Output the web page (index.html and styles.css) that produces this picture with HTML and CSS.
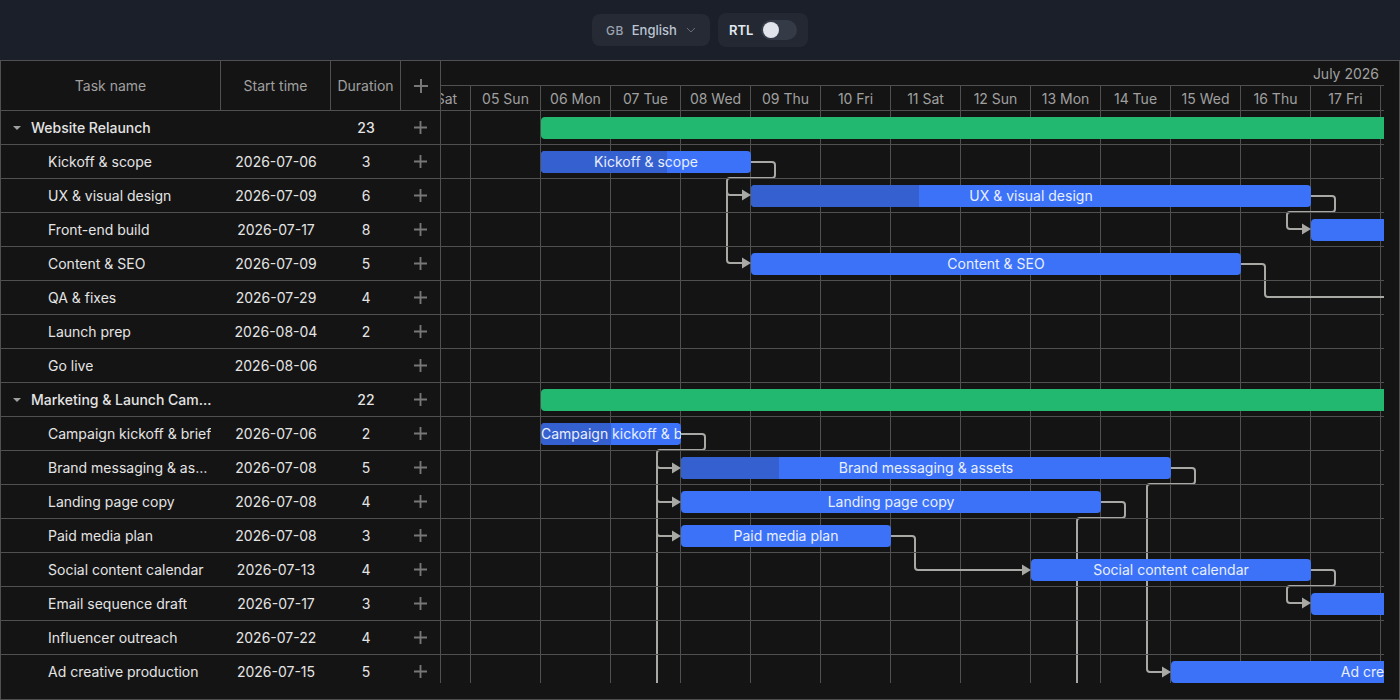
FILE: index.html
```html
<!DOCTYPE html>
<html lang="en">
<head>
    <meta charset="UTF-8">
    <meta name="viewport" content="width=device-width, initial-scale=1.0">
    <title>Gantt Chart</title>
    <link rel="stylesheet" href="styles.css">
</head>
<body>
    <svg class="defs" width="0" height="0">
        <symbol id="plus" viewBox="0 0 14 14"><path d="M7 0v14M0 7h14" stroke="currentColor" stroke-width="2" fill="none"/></symbol>
    </svg>
    <div class="toolbar">
        <div class="lang-select">
            <span class="lang-code">GB</span>
            <span class="lang-name">English</span>
            <svg class="chevron" width="10" height="6" viewBox="0 0 10 6"><path d="M1 1l4 4 4-4" stroke="currentColor" fill="none"/></svg>
        </div>
        <div class="rtl-box">
            <span class="rtl-label">RTL</span>
            <div class="switch"><div class="knob"></div></div>
        </div>
    </div>
    <div class="gantt">
        <div class="grid">
            <div class="grid-head">
                <div class="head-cell col-name">Task name</div>
                <div class="head-cell col-start">Start time</div>
                <div class="head-cell col-dur">Duration</div>
                <div class="head-cell col-add"><svg class="plus plus-head"><use href="#plus"/></svg></div>
            </div>
            <div class="grid-body">
                <div class="row group">
                    <div class="col-name"><span class="caret"></span><span class="name">Website Relaunch</span></div>
                    <div class="col-start"></div><div class="col-dur">23</div>
                    <div class="col-add"><svg class="plus"><use href="#plus"/></svg></div>
                </div>
                <div class="row">
                    <div class="col-name"><span class="name">Kickoff &amp; scope</span></div>
                    <div class="col-start">2026-07-06</div><div class="col-dur">3</div>
                    <div class="col-add"><svg class="plus"><use href="#plus"/></svg></div>
                </div>
                <div class="row">
                    <div class="col-name"><span class="name">UX &amp; visual design</span></div>
                    <div class="col-start">2026-07-09</div><div class="col-dur">6</div>
                    <div class="col-add"><svg class="plus"><use href="#plus"/></svg></div>
                </div>
                <div class="row">
                    <div class="col-name"><span class="name">Front-end build</span></div>
                    <div class="col-start">2026-07-17</div><div class="col-dur">8</div>
                    <div class="col-add"><svg class="plus"><use href="#plus"/></svg></div>
                </div>
                <div class="row">
                    <div class="col-name"><span class="name">Content &amp; SEO</span></div>
                    <div class="col-start">2026-07-09</div><div class="col-dur">5</div>
                    <div class="col-add"><svg class="plus"><use href="#plus"/></svg></div>
                </div>
                <div class="row">
                    <div class="col-name"><span class="name">QA &amp; fixes</span></div>
                    <div class="col-start">2026-07-29</div><div class="col-dur">4</div>
                    <div class="col-add"><svg class="plus"><use href="#plus"/></svg></div>
                </div>
                <div class="row">
                    <div class="col-name"><span class="name">Launch prep</span></div>
                    <div class="col-start">2026-08-04</div><div class="col-dur">2</div>
                    <div class="col-add"><svg class="plus"><use href="#plus"/></svg></div>
                </div>
                <div class="row">
                    <div class="col-name"><span class="name">Go live</span></div>
                    <div class="col-start">2026-08-06</div><div class="col-dur"></div>
                    <div class="col-add"><svg class="plus"><use href="#plus"/></svg></div>
                </div>
                <div class="row group">
                    <div class="col-name"><span class="caret"></span><span class="name">Marketing &amp; Launch Campaign</span></div>
                    <div class="col-start"></div><div class="col-dur">22</div>
                    <div class="col-add"><svg class="plus"><use href="#plus"/></svg></div>
                </div>
                <div class="row">
                    <div class="col-name"><span class="name">Campaign kickoff &amp; brief</span></div>
                    <div class="col-start">2026-07-06</div><div class="col-dur">2</div>
                    <div class="col-add"><svg class="plus"><use href="#plus"/></svg></div>
                </div>
                <div class="row">
                    <div class="col-name"><span class="name">Brand messaging &amp; assets</span></div>
                    <div class="col-start">2026-07-08</div><div class="col-dur">5</div>
                    <div class="col-add"><svg class="plus"><use href="#plus"/></svg></div>
                </div>
                <div class="row">
                    <div class="col-name"><span class="name">Landing page copy</span></div>
                    <div class="col-start">2026-07-08</div><div class="col-dur">4</div>
                    <div class="col-add"><svg class="plus"><use href="#plus"/></svg></div>
                </div>
                <div class="row">
                    <div class="col-name"><span class="name">Paid media plan</span></div>
                    <div class="col-start">2026-07-08</div><div class="col-dur">3</div>
                    <div class="col-add"><svg class="plus"><use href="#plus"/></svg></div>
                </div>
                <div class="row">
                    <div class="col-name"><span class="name">Social content calendar</span></div>
                    <div class="col-start">2026-07-13</div><div class="col-dur">4</div>
                    <div class="col-add"><svg class="plus"><use href="#plus"/></svg></div>
                </div>
                <div class="row">
                    <div class="col-name"><span class="name">Email sequence draft</span></div>
                    <div class="col-start">2026-07-17</div><div class="col-dur">3</div>
                    <div class="col-add"><svg class="plus"><use href="#plus"/></svg></div>
                </div>
                <div class="row">
                    <div class="col-name"><span class="name">Influencer outreach</span></div>
                    <div class="col-start">2026-07-22</div><div class="col-dur">4</div>
                    <div class="col-add"><svg class="plus"><use href="#plus"/></svg></div>
                </div>
                <div class="row">
                    <div class="col-name"><span class="name">Ad creative production</span></div>
                    <div class="col-start">2026-07-15</div><div class="col-dur">5</div>
                    <div class="col-add"><svg class="plus"><use href="#plus"/></svg></div>
                </div>
            </div>
        </div>
        <div class="timeline">
            <div class="month">July 2026</div>
            <div class="scale">
                <div class="day">04 Sat</div>
                <div class="day">05 Sun</div>
                <div class="day">06 Mon</div>
                <div class="day">07 Tue</div>
                <div class="day">08 Wed</div>
                <div class="day">09 Thu</div>
                <div class="day">10 Fri</div>
                <div class="day">11 Sat</div>
                <div class="day">12 Sun</div>
                <div class="day">13 Mon</div>
                <div class="day">14 Tue</div>
                <div class="day">15 Wed</div>
                <div class="day">16 Thu</div>
                <div class="day">17 Fri</div>
                <div class="day"></div>
            </div>
            <div class="chart">
                <svg class="links" width="943" height="572" viewBox="441 111 943 572">
                    <g class="link-lines">
                        <path d="M751 162H772Q775 162 775 165V175Q775 178 772 178H730Q727 178 727 181V192Q727 195 730 195H743"/>
                        <path d="M727 190V260Q727 263 730 263H743"/>
                        <path d="M1311 196H1332Q1335 196 1335 199V209Q1335 212 1332 212H1290Q1287 212 1287 215V226Q1287 229 1290 229H1303"/>
                        <path d="M1241 264H1262Q1265 264 1265 267V294Q1265 297 1268 297H1384"/>
                        <path d="M681 434H702Q705 434 705 437V447Q705 450 702 450H660Q657 450 657 453V683"/>
                        <path d="M657 465Q657 468 660 468H673"/>
                        <path d="M657 499Q657 502 660 502H673"/>
                        <path d="M657 533Q657 536 660 536H673"/>
                        <path d="M1171 468H1192Q1195 468 1195 471V481Q1195 484 1192 484H1150Q1147 484 1147 487V669Q1147 672 1150 672H1163"/>
                        <path d="M1101 502H1122Q1125 502 1125 505V515Q1125 518 1122 518H1080Q1077 518 1077 521V683"/>
                        <path d="M891 536H912Q915 536 915 539V567Q915 570 918 570H1023"/>
                        <path d="M1311 570H1332Q1335 570 1335 573V583Q1335 586 1332 586H1290Q1287 586 1287 589V600Q1287 603 1290 603H1303"/>
                    </g>
                    <g class="link-arrows">
                        <polygon points="742,189.5 751,195 742,200.5"/>
                        <polygon points="742,257.5 751,263 742,268.5"/>
                        <polygon points="1302,223.5 1311,229 1302,234.5"/>
                        <polygon points="672,462.5 681,468 672,473.5"/>
                        <polygon points="672,496.5 681,502 672,507.5"/>
                        <polygon points="672,530.5 681,536 672,541.5"/>
                        <polygon points="1022,564.5 1031,570 1022,575.5"/>
                        <polygon points="1302,597.5 1311,603 1302,608.5"/>
                        <polygon points="1162,666.5 1171,672 1162,677.5"/>
                    </g>
                </svg>
                <div class="lane"><div class="bar summary" style="left:100px;width:910px"></div></div>
                <div class="lane"><div class="bar" style="left:100px;width:210px"><div class="progress" style="width:126px"></div><span class="bar-text">Kickoff &amp; scope</span></div></div>
                <div class="lane"><div class="bar" style="left:310px;width:560px"><div class="progress" style="width:168px"></div><span class="bar-text">UX &amp; visual design</span></div></div>
                <div class="lane"><div class="bar" style="left:870px;width:700px"><span class="bar-text">Front-end build</span></div></div>
                <div class="lane"><div class="bar" style="left:310px;width:490px"><span class="bar-text">Content &amp; SEO</span></div></div>
                <div class="lane"></div>
                <div class="lane"></div>
                <div class="lane"></div>
                <div class="lane"><div class="bar summary" style="left:100px;width:910px"></div></div>
                <div class="lane"><div class="bar" style="left:100px;width:140px"><div class="progress" style="width:70px"></div><span class="bar-text">Campaign kickoff &amp; brief</span></div></div>
                <div class="lane"><div class="bar" style="left:240px;width:490px"><div class="progress" style="width:98px"></div><span class="bar-text">Brand messaging &amp; assets</span></div></div>
                <div class="lane"><div class="bar" style="left:240px;width:420px"><span class="bar-text">Landing page copy</span></div></div>
                <div class="lane"><div class="bar" style="left:240px;width:210px"><span class="bar-text">Paid media plan</span></div></div>
                <div class="lane"><div class="bar" style="left:590px;width:280px"><span class="bar-text">Social content calendar</span></div></div>
                <div class="lane"><div class="bar" style="left:870px;width:350px"><span class="bar-text">Email sequence draft</span></div></div>
                <div class="lane"></div>
                <div class="lane"><div class="bar" style="left:730px;width:490px"><span class="bar-text">Ad creative production</span></div></div>
            </div>
        </div>
    </div>
</body>
</html>
```

FILE: styles.css
```css
* {
    box-sizing: border-box;
}
html, body {
    height: 100%;
}
body {
    margin: 0;
    overflow: hidden;
    background-color: #1a1f2a;
    color: #e4e4e4;
    font-family: Inter, "Liberation Sans", sans-serif;
    font-size: 14px;
}
.defs {
    display: block;
}
.toolbar {
    display: flex;
    justify-content: center;
    align-items: center;
    gap: 8px;
    height: 60px;
    background-color: #1a1f2a;
}
.lang-select {
    display: flex;
    align-items: center;
    width: 118px;
    height: 32px;
    padding: 0 14px;
    background-color: #252a35;
    border-radius: 8px;
}
.lang-code {
    width: 26px;
    color: #9aa3af;
    font-size: 12px;
    font-weight: 500;
    letter-spacing: 0.5px;
}
.lang-name {
    width: 55px;
    color: #bcc5d1;
    font-size: 13px;
    font-weight: 500;
}
.chevron {
    color: #6b7280;
}
.rtl-box {
    display: flex;
    align-items: center;
    gap: 8px;
    width: 90px;
    height: 34px;
    padding: 0 11px;
    background-color: #232833;
    border-radius: 8px;
}
.rtl-label {
    color: #e2e8f0;
    font-size: 13px;
    font-weight: 600;
    width: 24px;
}
.switch {
    display: flex;
    align-items: center;
    width: 36px;
    height: 20px;
    padding: 0 2px;
    background-color: #343a46;
    border-radius: 10px;
}
.knob {
    width: 16px;
    height: 16px;
    background-color: #e2e4ec;
    border-radius: 50%;
}
.gantt {
    display: flex;
    height: 640px;
    padding-right: 15px;
    background-color: #141414;
    border: 1px solid #505050;
}
.grid {
    flex: 0 0 440px;
    min-width: 0;
}
.grid-head {
    display: flex;
    height: 50px;
    color: #a0a0a0;
    border-bottom: 1px solid #505050;
}
.head-cell {
    display: flex;
    justify-content: center;
    align-items: center;
    border-right: 1px solid #505050;
}
.col-name {
    flex: 0 0 220px;
    min-width: 0;
}
.col-start {
    flex: 0 0 110px;
    text-align: center;
}
.col-dur {
    flex: 0 0 70px;
    text-align: center;
}
.col-add {
    flex: 0 0 40px;
    display: flex;
    justify-content: center;
    align-items: center;
    color: #777;
}
.grid-body {
    height: 572px;
    overflow: hidden;
    border-right: 1px solid #505050;
}
.row {
    display: flex;
    align-items: center;
    height: 34px;
    border-bottom: 1px solid #505050;
}
.row .col-name {
    display: flex;
    align-items: center;
    padding: 0 8px 0 47px;
}
.row .col-add {
    flex-basis: 39px;
}
.row.group .col-name {
    padding-left: 12px;
}
.name {
    overflow: hidden;
    white-space: nowrap;
    text-overflow: ellipsis;
}
.row.group {
    font-weight: 500;
}
.caret {
    flex: none;
    width: 0;
    height: 0;
    margin-right: 10px;
    border-top: 4px solid #a0a0a0;
    border-left: 4px solid transparent;
    border-right: 4px solid transparent;
}
.plus {
    width: 13px;
    height: 13px;
}
.plus-head {
    width: 14px;
    height: 14px;
}
.timeline {
    flex: 0 0 943px;
    min-width: 0;
    overflow: hidden;
}
.month {
    height: 25px;
    padding: 4px 5px 0 0;
    color: #a0a0a0;
    text-align: right;
    border-bottom: 1px solid #505050;
}
.scale {
    display: flex;
    height: 25px;
    margin-left: -40px;
    color: #a0a0a0;
    border-bottom: 1px solid #505050;
}
.day {
    flex: 0 0 70px;
    display: flex;
    justify-content: center;
    align-items: center;
    border-right: 1px solid #505050;
}
.chart {
    position: relative;
    height: 572px;
    overflow: hidden;
    background-image: linear-gradient(to right, #505050 1px, transparent 1px);
    background-size: 70px 34px;
    background-position: 29px 0;
}
.links {
    position: absolute;
    top: 0;
    left: 0;
}
.link-lines path {
    fill: none;
    stroke: #a8a8a4;
    stroke-width: 2;
}
.link-arrows polygon {
    fill: #a8a8a4;
}
.lane {
    position: relative;
    height: 34px;
    border-bottom: 1px solid #505050;
}
.bar {
    position: absolute;
    top: 6px;
    height: 22px;
    overflow: hidden;
    color: #e8efff;
    line-height: 22px;
    text-align: center;
    white-space: nowrap;
    background-color: #3b72f8;
    border-radius: 4px;
}
.bar.summary {
    background-color: #22b86f;
}
.progress {
    position: absolute;
    top: 0;
    left: 0;
    height: 100%;
    background-color: #3560d0;
}
.bar-text {
    position: relative;
}
```
